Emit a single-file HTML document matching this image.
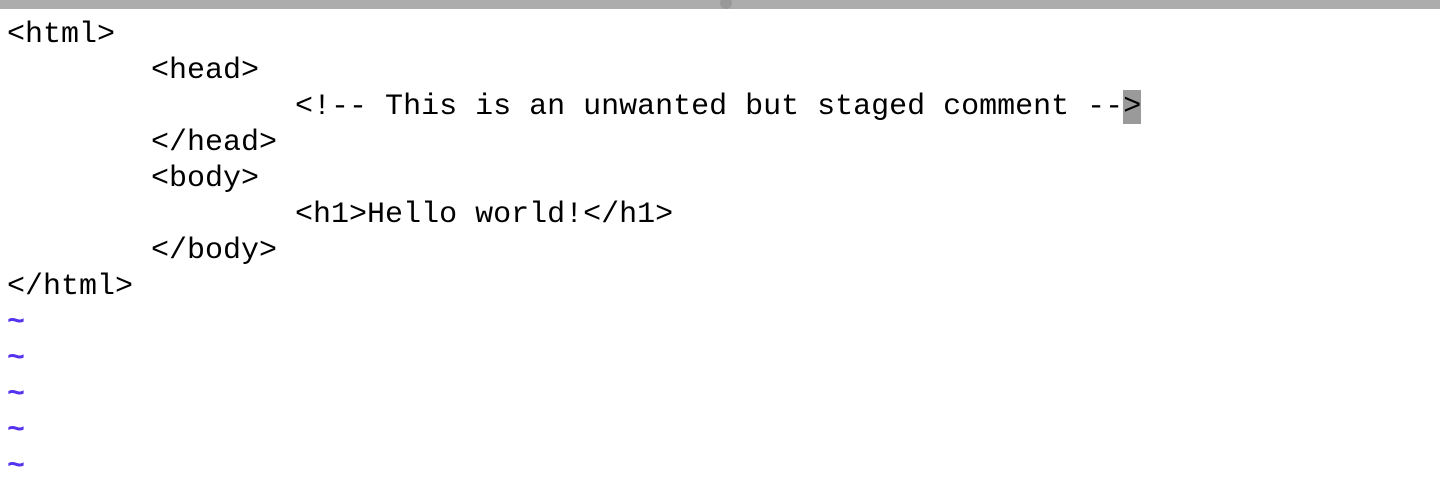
<!DOCTYPE html>
<html><head><meta charset="utf-8"><style>
html,body{margin:0;padding:0;background:#fff;width:1440px;height:470px;overflow:hidden}
.bar{position:absolute;left:0;top:0;width:1440px;height:9px;background:#acacac}
.dot{position:absolute;left:720px;top:-3px;width:12px;height:12px;border-radius:50%;background:#999}
pre{position:absolute;left:7px;top:17px;margin:0;font-family:"Liberation Mono",monospace;font-size:30px;line-height:36px;color:#000;tab-size:8;-moz-tab-size:8}
.cur{background:#9a9a9a}
.t{color:#5533ee;font-weight:bold}
</style></head><body>
<div class="bar"><div class="dot"></div></div>
<pre>&lt;html&gt;
	&lt;head&gt;
		&lt;!-- This is an unwanted but staged comment --<span class="cur">&gt;</span>
	&lt;/head&gt;
	&lt;body&gt;
		&lt;h1&gt;Hello world!&lt;/h1&gt;
	&lt;/body&gt;
&lt;/html&gt;
<span class="t">~</span>
<span class="t">~</span>
<span class="t">~</span>
<span class="t">~</span>
<span class="t">~</span></pre>
</body></html>
